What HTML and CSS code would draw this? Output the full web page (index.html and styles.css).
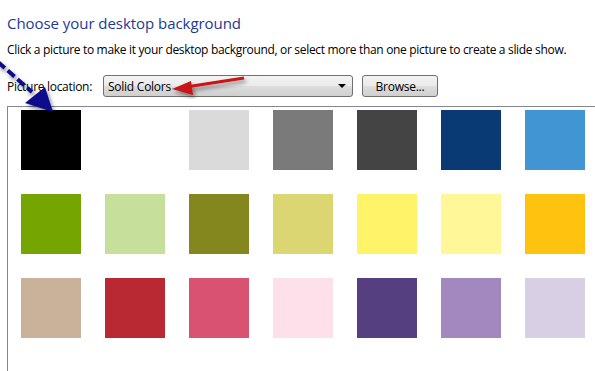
FILE: index.html
```html
<!DOCTYPE html>
<html lang="en">
<head>
    <meta charset="UTF-8">
    <title>Desktop Background</title>
    <link rel="stylesheet" href="styles.css">
</head>
<body>
<div class="page">
    <h1 class="title">Choose your desktop background</h1>
    <p class="intro">Click a picture to make it your desktop background, or select more than one picture to create a slide show.</p>
    <div class="locationRow">
        <span class="label">Picture location:</span>
        <div class="select">
            <span>Solid Colors</span>
            <i class="caret"></i>
        </div>
        <button class="browse">Browse...</button>
    </div>
    <div class="panel">
        <div class="grid">
            <div class="swatch" style="background:#000000"></div>
            <div class="swatch" style="background:#ffffff"></div>
            <div class="swatch" style="background:#dadada"></div>
            <div class="swatch" style="background:#7a7a7a"></div>
            <div class="swatch" style="background:#444444"></div>
            <div class="swatch" style="background:#0a3a74"></div>
            <div class="swatch" style="background:#4295d3"></div>

            <div class="swatch" style="background:#74a500"></div>
            <div class="swatch" style="background:#c6e09c"></div>
            <div class="swatch" style="background:#84861e"></div>
            <div class="swatch" style="background:#dbd672"></div>
            <div class="swatch" style="background:#fff36a"></div>
            <div class="swatch" style="background:#fff798"></div>
            <div class="swatch" style="background:#ffc20f"></div>

            <div class="swatch" style="background:#c9b299"></div>
            <div class="swatch" style="background:#b92934"></div>
            <div class="swatch" style="background:#d95272"></div>
            <div class="swatch" style="background:#fee0ea"></div>
            <div class="swatch" style="background:#553f80"></div>
            <div class="swatch" style="background:#a288bf"></div>
            <div class="swatch" style="background:#d9cfe4"></div>
        </div>
    </div>
    <!-- annotation arrows drawn over the screenshot -->
    <svg class="notes" width="595" height="371" viewBox="0 0 595 371">
        <defs>
            <filter id="shade" x="-20%" y="-20%" width="140%" height="140%">
                <feGaussianBlur in="SourceAlpha" stdDeviation="2"/>
                <feOffset dx="2" dy="3" result="b"/>
                <feComponentTransfer><feFuncA type="linear" slope="0.45"/></feComponentTransfer>
                <feMerge><feMergeNode/><feMergeNode in="SourceGraphic"/></feMerge>
            </filter>
        </defs>
        <g filter="url(#shade)">
            <line x1="-2" y1="62" x2="32" y2="92" stroke="#0b0b8c" stroke-width="4" stroke-dasharray="9 4"/>
            <polygon points="25,103 45,87 53,112" fill="#0b0b8c"/>
        </g>
        <g filter="url(#shade)">
            <line x1="244" y1="78" x2="186" y2="87" stroke="#c81414" stroke-width="3"/>
            <polygon points="172,89 191,81 193,95" fill="#c81414"/>
        </g>
    </svg>
</div>
</body>
</html>
```

FILE: styles.css
```css
*{
    margin: 0;
    padding: 0;
    box-sizing: border-box;
}
body
{
    background: #ffffff;
    font-family: "Open Sans", "Liberation Sans", sans-serif;
    color: #000000;
    overflow: hidden;
}
.page
{
    position: relative;
    width: 595px;
    height: 371px;
    overflow: hidden;
    padding: 12px 0 0 7px;
}
.title
{
    font-size: 15px;
    font-weight: normal;
    color: #1e3a94;
    line-height: 22px;
    letter-spacing: -0.05px;
}
.intro
{
    margin-top: 8px;
    font-size: 12px;
    line-height: 16px;
    letter-spacing: -0.32px;
}
.locationRow
{
    display: flex;
    align-items: center;
    margin-top: 17px;
    height: 22px;
}
.label
{
    font-size: 12px;
    letter-spacing: -0.3px;
    width: 96px;
}
.select
{
    display: flex;
    align-items: center;
    justify-content: space-between;
    width: 250px;
    height: 22px;
    padding: 0 6px 0 4px;
    border: 1px solid #707070;
    border-radius: 3px;
    background: linear-gradient(#f3f3f3 0%, #ebebeb 50%, #dddddd 51%, #cfcfcf 100%);
    font-size: 12px;
    letter-spacing: -0.25px;
}
.caret
{
    width: 0;
    height: 0;
    border-left: 4px solid transparent;
    border-right: 4px solid transparent;
    border-top: 4px solid #000000;
}
.browse
{
    margin-left: 9px;
    width: 76px;
    height: 22px;
    border: 1px solid #707070;
    border-radius: 3px;
    background: linear-gradient(#f2f2f2 0%, #ebebeb 50%, #dddddd 51%, #cfcfcf 100%);
    font-family: "Open Sans", "Liberation Sans", sans-serif;
    font-size: 12px;
    letter-spacing: -0.25px;
    color: #000000;
}
.panel
{
    margin-top: 9px;
    height: 270px;
    border-top: 1px solid #828790;
    border-left: 1px solid #828790;
    padding: 3px 0 0 13px;
}
.grid
{
    display: grid;
    grid-template-columns: repeat(7, 60px);
    grid-auto-rows: 60px;
    gap: 24px;
}
.notes
{
    position: absolute;
    left: 0;
    top: 0;
    pointer-events: none;
}
```
